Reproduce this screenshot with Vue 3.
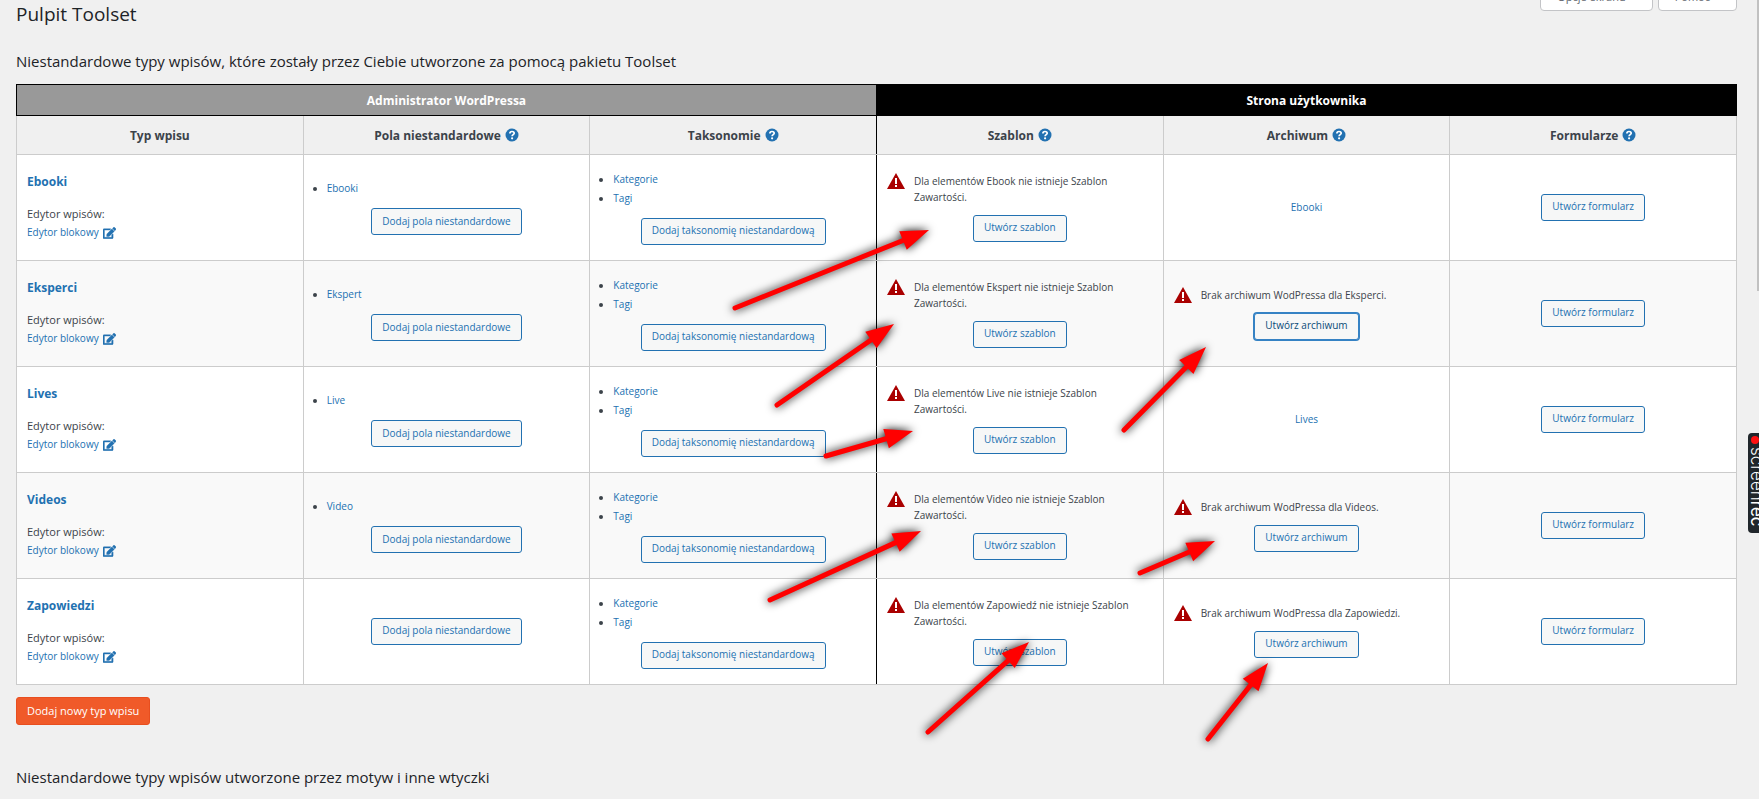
<template>
  <div class="page">
    <header class="top">
      <h1>Pulpit Toolset</h1>
      <div class="screen-meta">
        <button type="button" class="meta-tab">Opcje ekranu</button>
        <button type="button" class="meta-tab">Pomoc</button>
      </div>
    </header>

    <main>
      <h2>Niestandardowe typy wpisów, które zostały przez Ciebie utworzone za pomocą pakietu Toolset</h2>

      <table class="types">
        <thead>
          <tr class="groups">
            <th colspan="3" class="group-admin">Administrator WordPressa</th>
            <th colspan="3" class="group-front">Strona użytkownika</th>
          </tr>
          <tr class="columns">
            <th v-for="col in columns" :key="col.name">
              <span class="col-name">
                {{ col.name }}
                <a v-if="col.help" href="#" class="help" :aria-label="'Pomoc: ' + col.name">
                  <svg viewBox="0 0 14 14" width="14" height="14">
                    <circle cx="7" cy="7" r="6.5" fill="#2271b1" />
                    <path d="M4.9 5.5C4.9 4.2 5.8 3.5 7 3.5s2.2.7 2.2 1.8C9.2 6.6 7.1 6.7 7.1 8.2" fill="none" stroke="#fff" stroke-width="1.7" />
                    <circle cx="7.1" cy="10.3" r="1.1" fill="#fff" />
                  </svg>
                </a>
              </span>
            </th>
          </tr>
        </thead>
        <tbody>
          <tr v-for="row in rows" :key="row.name">
            <td>
              <a href="#" class="type-name">{{ row.name }}</a>
              <div class="editor">Edytor wpisów:</div>
              <a href="#" class="editor-link">
                Edytor blokowy
                <svg viewBox="0 0 576 512" width="13" height="12">
                  <path fill="currentColor" stroke="currentColor" stroke-width="16" d="M402.6 83.2l90.2 90.2c3.8 3.8 3.8 10 0 13.8L274.4 405.6l-92.8 10.3c-12.4 1.4-22.9-9.1-21.5-21.5l10.3-92.8L388.8 83.2c3.8-3.8 10-3.8 13.8 0zm162-22.9l-48.8-48.8c-15.2-15.2-39.9-15.2-55.2 0l-35.4 35.4c-3.8 3.8-3.8 10 0 13.8l90.2 90.2c3.8 3.8 10 3.8 13.8 0l35.4-35.4c15.2-15.3 15.2-40 0-55.2zM384 346.2V448H64V128h229.8c3.2 0 6.2-1.3 8.5-3.5l40-40c7.6-7.6 2.2-20.5-8.5-20.5H48C21.5 64 0 85.5 0 112v352c0 26.500 21.5 48 48 48h352c26.5 0 48-21.5 48-48V306.2c0-10.7-12.9-16-20.5-8.5l-40 40c-2.2 2.3-3.5 5.3-3.5 8.5z" />
                </svg>
              </a>
            </td>
            <td>
              <div class="stack">
                <ul v-if="row.field">
                  <li><a href="#">{{ row.field }}</a></li>
                </ul>
                <button type="button" class="btn">Dodaj pola niestandardowe</button>
              </div>
            </td>
            <td>
              <div class="stack">
                <ul>
                  <li><a href="#">Kategorie</a></li>
                  <li><a href="#">Tagi</a></li>
                </ul>
                <button type="button" class="btn">Dodaj taksonomię niestandardową</button>
              </div>
            </td>
            <td>
              <div class="stack">
                <div class="warning">
                  <svg viewBox="0 0 18 16" width="18" height="16">
                    <path d="M9 0l9 16H0z" fill="#a00" />
                    <path d="M8 5h2v6H8zM8 12h2v2H8z" fill="#fff" />
                  </svg>
                  <p>Dla elementów {{ row.single }} nie istnieje Szablon Zawartości.</p>
                </div>
                <button type="button" class="btn">Utwórz szablon</button>
              </div>
            </td>
            <td>
              <div class="stack">
                <a v-if="row.hasArchive" href="#">{{ row.name }}</a>
                <template v-else>
                  <div class="warning">
                    <svg viewBox="0 0 18 16" width="18" height="16">
                      <path d="M9 0l9 16H0z" fill="#a00" />
                      <path d="M8 5h2v6H8zM8 12h2v2H8z" fill="#fff" />
                    </svg>
                    <p>Brak archiwum WodPressa dla {{ row.name }}.</p>
                  </div>
                  <button type="button" class="btn" :class="{ focused: row.focused }">Utwórz archiwum</button>
                </template>
              </div>
            </td>
            <td>
              <div class="stack">
                <button type="button" class="btn">Utwórz formularz</button>
              </div>
            </td>
          </tr>
        </tbody>
      </table>

      <button type="button" class="btn-add">Dodaj nowy typ wpisu</button>

      <h2>Niestandardowe typy wpisów utworzone przez motyw i inne wtyczki</h2>
    </main>

    <!-- annotation arrows drawn over the page -->
    <svg class="arrows" width="1759" height="799" aria-hidden="true">
      <g v-for="(a, i) in arrows" :key="i">
        <line :x1="a.x1" :y1="a.y1" :x2="a.bx" :y2="a.by" />
        <polygon :points="a.head" />
      </g>
    </svg>

    <div class="scrollbar"></div>
    <div class="recorder">
      <span class="dot"></span>
      <span class="label">screen<b>rec</b></span>
    </div>
  </div>
</template>

<script setup>
const columns = [
  { name: 'Typ wpisu', help: false },
  { name: 'Pola niestandardowe', help: true },
  { name: 'Taksonomie', help: true },
  { name: 'Szablon', help: true },
  { name: 'Archiwum', help: true },
  { name: 'Formularze', help: true }
]

const rows = [
  { name: 'Ebooki', field: 'Ebooki', single: 'Ebook', hasArchive: true },
  { name: 'Eksperci', field: 'Ekspert', single: 'Ekspert', hasArchive: false, focused: true },
  { name: 'Lives', field: 'Live', single: 'Live', hasArchive: true },
  { name: 'Videos', field: 'Video', single: 'Video', hasArchive: false },
  { name: 'Zapowiedzi', field: null, single: 'Zapowiedź', hasArchive: false }
]

const HEAD_LENGTH = 28
const HEAD_HALF = 10

// from tail (x1, y1) to tip (x2, y2)
const arrow = (x1, y1, x2, y2) => {
  const len = Math.hypot(x2 - x1, y2 - y1)
  const ux = (x2 - x1) / len
  const uy = (y2 - y1) / len
  const bx = x2 - ux * HEAD_LENGTH
  const by = y2 - uy * HEAD_LENGTH
  const left = `${bx - uy * HEAD_HALF},${by + ux * HEAD_HALF}`
  const right = `${bx + uy * HEAD_HALF},${by - ux * HEAD_HALF}`
  return { x1, y1, bx, by, head: `${x2},${y2} ${left} ${right}` }
}

const arrows = [
  arrow(735, 308, 929, 230),
  arrow(777, 405, 894, 324),
  arrow(826, 456, 913, 431),
  arrow(770, 600, 921, 531),
  arrow(928, 732, 1029, 642),
  arrow(1124, 430, 1206, 347),
  arrow(1140, 573, 1215, 541),
  arrow(1208, 739, 1268, 663)
]
</script>

<style>
body {
  background: #f0f0f0;
}
</style>

<style scoped>
.page,
.page * {
  box-sizing: border-box;
}

.page {
  position: relative;
  min-height: 100vh;
  padding: 0 22px 0 16px;
  overflow: hidden;
  font-family: "Open Sans", "Noto Sans", sans-serif;
  font-size: 10px;
  line-height: 19px;
  color: #3c434a;
}

a {
  color: #2271b1;
  text-decoration: none;
}

button {
  font-family: inherit;
  cursor: pointer;
}

.top {
  display: flex;
  justify-content: space-between;
  align-items: flex-start;
}

h1 {
  margin: 1px 0 0;
  font-size: 19px;
  font-weight: 400;
  line-height: 26px;
  color: #1d2327;
}

.screen-meta {
  display: flex;
  gap: 5px;
  margin-top: -17px;
}

.meta-tab {
  height: 28px;
  padding: 0 26px 0 16px;
  border: 1px solid #c3c4c7;
  border-radius: 0 0 4px 4px;
  background: #fff;
  font-size: 11px;
  line-height: 26px;
  color: #646970;
}

h2 {
  margin: 24px 0 13px;
  font-size: 15px;
  font-weight: 400;
  line-height: 20px;
  color: #1d2327;
}

.types {
  width: 100%;
  table-layout: fixed;
  border-collapse: collapse;
}

.types th {
  padding: 0 10px;
  font-size: 12px;
  font-weight: 700;
  text-align: center;
}

.groups th {
  height: 31px;
  border: 1px solid #000;
  color: #fff;
}

.group-admin {
  background: #999;
}

.group-front {
  background: #000;
}

.columns th {
  height: 39px;
  border: 1px solid #ccc;
}

.types td {
  height: 106px;
  padding: 0 10px 1px;
  border: 1px solid #ccc;
  background: #fff;
  vertical-align: middle;
}

.types tbody tr:nth-child(even) td {
  background: #f9f9f9;
}

.columns th:nth-child(3),
.types td:nth-child(3) {
  border-right-color: #000;
}

.columns th:nth-child(4),
.types td:nth-child(4) {
  border-left-color: #000;
}

.col-name {
  display: flex;
  justify-content: center;
  align-items: center;
  gap: 4px;
}

.help {
  display: flex;
}

.type-name {
  display: block;
  margin-bottom: 13px;
  font-size: 12px;
  font-weight: 700;
}

.editor {
  font-size: 11px;
}

.editor-link {
  display: flex;
  align-items: center;
  gap: 4px;
}

.stack {
  display: flex;
  flex-direction: column;
  align-items: center;
  gap: 10px;
}

.stack ul {
  align-self: stretch;
  margin: 0;
  padding-left: 13px;
}

.warning {
  display: flex;
  align-self: stretch;
  align-items: flex-start;
  gap: 9px;
  line-height: 16px;
}

.warning svg {
  flex: none;
}

.warning p {
  margin: 0;
  padding-right: 20px;
}

.btn {
  height: 27px;
  padding: 0 10px 2px;
  border: 1px solid #2271b1;
  border-radius: 3px;
  background: #f6f7f7;
  font-size: 10px;
  color: #2271b1;
}

.btn.focused {
  border-color: #3582c4;
  box-shadow: 0 0 0 1px #3582c4;
  color: #0a4b78;
}

.btn-add {
  display: block;
  height: 28px;
  margin: 12px 0 42px;
  padding: 0 10px 1px;
  border: 1px solid #e84e1f;
  border-radius: 3px;
  background: #f05a29;
  font-size: 11px;
  color: #fff;
}

.arrows {
  position: absolute;
  top: 0;
  left: 0;
  pointer-events: none;
}

.arrows g {
  filter: drop-shadow(0 0 5px #000);
}

.arrows line {
  stroke: #f00;
  stroke-width: 5;
  stroke-linecap: round;
}

.arrows polygon {
  fill: #f00;
}

.scrollbar {
  position: absolute;
  top: 0;
  right: 0;
  width: 2px;
  height: 291px;
  background: #c1c1c1;
}

.recorder {
  position: absolute;
  top: 433px;
  right: 0;
  width: 11px;
  height: 100px;
  overflow: hidden;
  border-radius: 4px 0 0 4px;
  background: #20262b;
}

.dot {
  display: block;
  width: 8px;
  height: 8px;
  margin: 3px 0 3px 3px;
  border-radius: 50%;
  background: #f11;
}

.label {
  display: block;
  width: 18px;
  writing-mode: vertical-rl;
  font-family: "Inter", sans-serif;
  font-size: 17px;
  font-weight: 300;
  line-height: 18px;
  color: #fff;
}
</style>
